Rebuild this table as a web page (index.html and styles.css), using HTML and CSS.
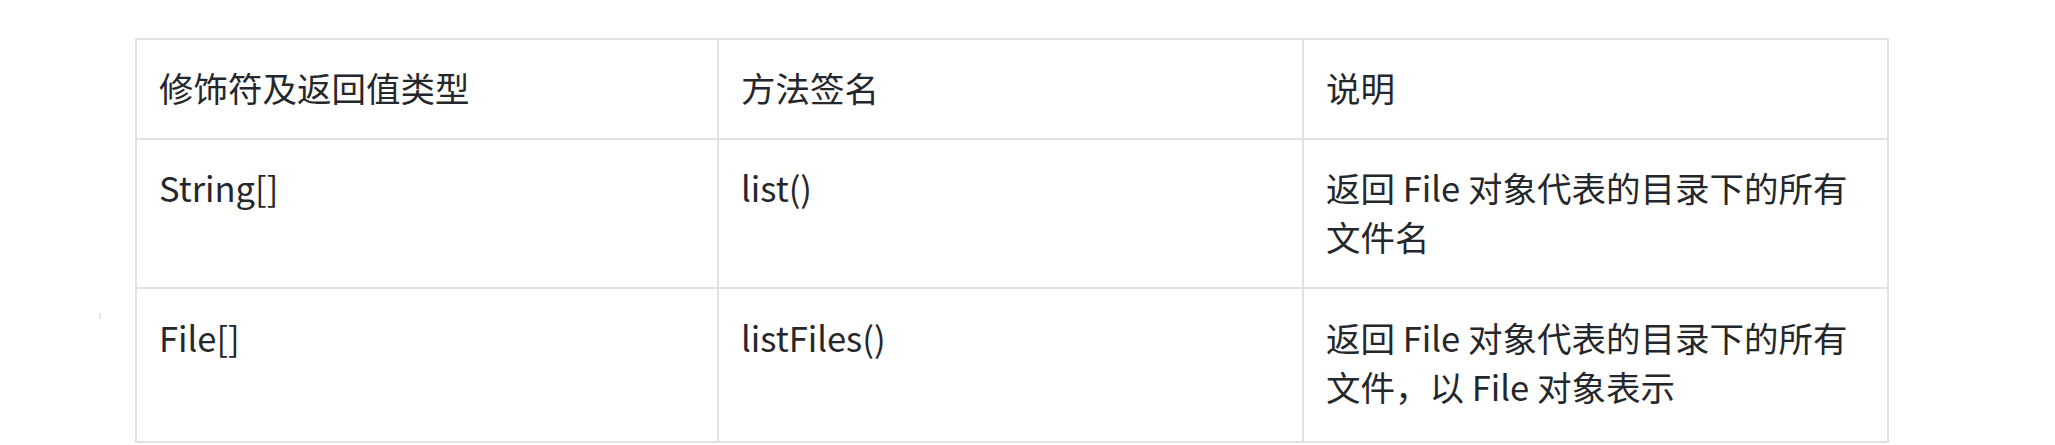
FILE: index.html
```html
<!DOCTYPE html>
<html lang="zh-CN">
<head>
<meta charset="utf-8">
<title>File 方法</title>
<link rel="stylesheet" href="styles.css">
</head>
<body>
<div class="page">
  <span class="mark"></span>
  <table class="api-table">
    <colgroup>
      <col class="c1">
      <col class="c2">
      <col class="c3">
    </colgroup>
    <thead>
      <tr>
        <th>修饰符及返回值类型</th>
        <th>方法签名</th>
        <th>说明</th>
      </tr>
    </thead>
    <tbody>
      <tr>
        <td>String[]</td>
        <td>list()</td>
        <td>返回 File 对象代表的目录下的所有文件名</td>
      </tr>
      <tr class="last">
        <td>File[]</td>
        <td>listFiles()</td>
        <td>返回 File 对象代表的目录下的所有文件，以 File 对象表示</td>
      </tr>
    </tbody>
  </table>
</div>
</body>
</html>
```
FILE: styles.css
```css
html, body {
  margin: 0;
  padding: 0;
  background: #ffffff;
}

.page {
  display: flex;
  align-items: flex-start;
  padding: 38px 0 0 99px;
  font-family: "Noto Sans CJK SC", "Noto Sans", sans-serif;
  color: #24272b;
}

.mark {
  width: 2px;
  height: 6px;
  background: #e4e5e8;
  margin-top: 275px;
  margin-right: 34px;
  flex: none;
}

.api-table {
  border-collapse: collapse;
  table-layout: fixed;
  width: 1752px;
  font-size: 34.5px;
  line-height: 49px;
}

.c1 { width: 582px; }
.c2 { width: 585px; }
.c3 { width: 585px; }

.api-table th,
.api-table td {
  border: 2px solid #dfe1e5;
  padding: 23px 22px 26px;
  text-align: left;
  vertical-align: top;
  font-weight: 400;
}

.api-table tr.last td {
  padding-top: 24px;
  padding-bottom: 30px;
}
```
